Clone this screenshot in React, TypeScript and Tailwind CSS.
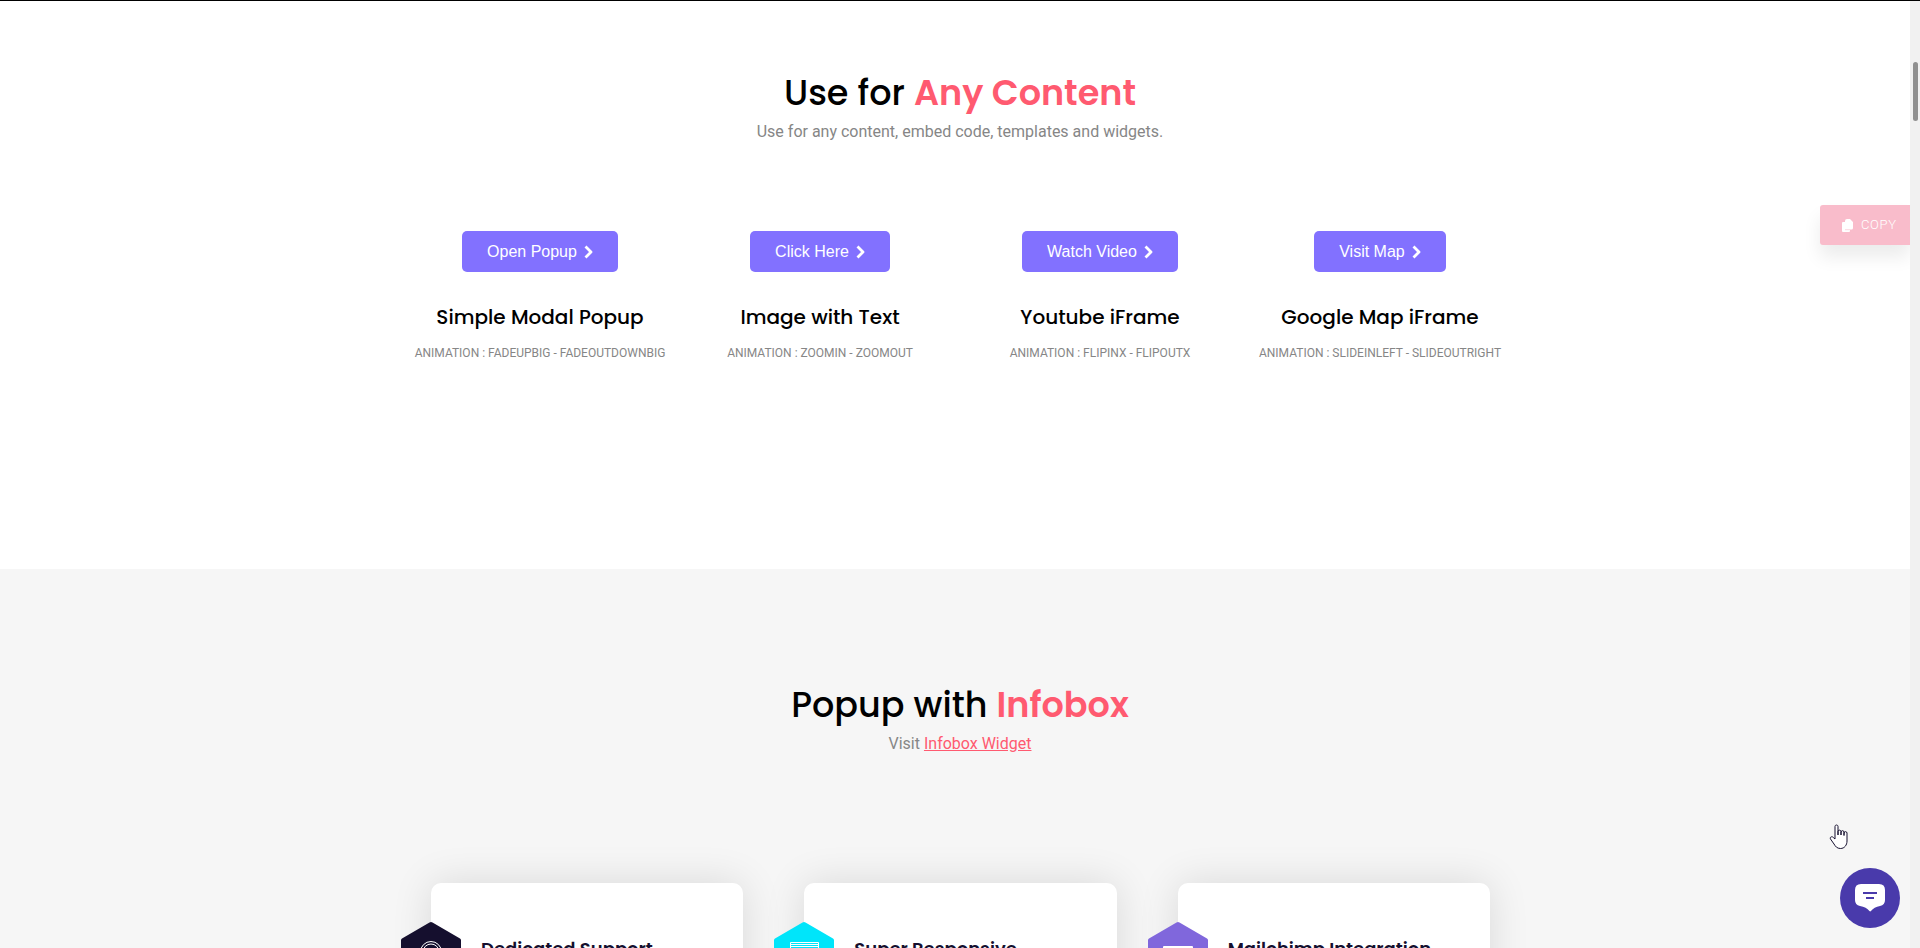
const demos = [
  { button: "Open Popup", title: "Simple Modal Popup", animation: "FadeUpBig - FadeOutDownBig" },
  { button: "Click Here", title: "Image with Text", animation: "ZoomIn - ZoomOut" },
  { button: "Watch Video", title: "Youtube iFrame", animation: "FlipInX - FlipOutX" },
  { button: "Visit Map", title: "Google Map iFrame", animation: "SlideInLeft - SlideOutRight" },
];

const ChevronIcon = () => (
  <svg viewBox="0 0 9 14" className="w-[9px] h-3.5" fill="none" stroke="currentColor" strokeWidth="2.8">
    <path d="M1.500 1.500L7 7l-5.500 5.500" strokeLinejoin="round" />
  </svg>
);

const CopyIcon = () => (
  <svg viewBox="0 0 11 13" className="w-[11px] h-[13px]" fill="currentColor">
    <path d="M5 0h3l3 3v6q0 1.500-1.500 1.500H8V12q0 1-1 1H1q-1 0-1-1V4q0-1 1-1h2V2q0-2 2-2z" />
    <path d="M3 10.700h5" stroke="#f9bccb" strokeWidth=".6" />
  </svg>
);

const SupportIcon = () => (
  <svg viewBox="0 0 32 32" className="w-8 h-8" fill="none" stroke="white">
    <circle cx="16" cy="12" r="10.5" />
    <circle cx="16" cy="12" r="8" />
    <path d="M5.500 12v7h3M26.500 12v7h-3" />
  </svg>
);

const ResponsiveIcon = () => (
  <svg viewBox="0 0 32 32" className="w-8 h-8" fill="none" stroke="white">
    <path d="M2.500 2.500h28v22h-28zM2.500 4.500h28M2.500 6.500h28M11 29.500h10" />
  </svg>
);

const MailIcon = () => (
  <svg viewBox="0 0 32 32" className="w-8 h-8" fill="none" stroke="white">
    <path d="M1.500 6.500h29v19h-29z" />
    <path d="M1.500 7.500h29M2 8l14 10 14-10" />
  </svg>
);

const infoboxes = [
  { title: "Dedicated Support", color: "text-[#150f2e]", icon: <SupportIcon /> },
  { title: "Super Responsive", color: "text-[#00e5fa]", icon: <ResponsiveIcon /> },
  { title: "Mailchimp Integration", color: "text-[#8067dc]", icon: <MailIcon /> },
];

// Section heading
const Heading = ({ text, accent }: { text: string; accent: string }) => (
  <h2 className="font-[Poppins,Inter,sans-serif] text-[35px] leading-[45px] font-medium text-black">
    {text} <span className="font-semibold text-[#ff5a70]">{accent}</span>
  </h2>
);

// Hexagon badge on the card edge
const Hexagon = ({ color, icon }: { color: string; icon: React.ReactNode }) => (
  <div className={`relative w-[60px] h-[68px] -ml-[30px] shrink-0 flex items-center justify-center ${color}`}>
    <svg viewBox="0 0 60 68" className="absolute inset-0 w-full h-full" fill="currentColor">
      <path d="M28.500 .6q1.500-1 3 0l27.500 15.800q1 .6 1 1.800v31.600q0 1.200-1 1.800L31.500 67.400q-1.500 1-3 0L1 51.600q-1-.6-1-1.800V18.200q0-1.200 1-1.800z" />
    </svg>
    <div className="relative">{icon}</div>
  </div>
);

export default function App() {
  return (
    <div className="relative h-screen overflow-hidden bg-white font-[Roboto,sans-serif] border-t border-black">
      <section className="pt-[69px] pb-[204px] text-center">
        <Heading text="Use for" accent="Any Content" />
        <p className="mt-[5px] text-base leading-6 text-[#868686]">
          Use for any content, embed code, templates and widgets.
        </p>

        <div className="mt-[87px] max-w-[1120px] mx-auto grid grid-cols-4">
          {demos.map((demo) => (
            <div key={demo.title} className="flex flex-col items-center">
              <button className="h-[41px] px-[25px] flex items-center gap-[7px] rounded-[5px] bg-[#8271ff] text-white text-base font-['Liberation_Sans',Arial,sans-serif] whitespace-nowrap">
                {demo.button}
                <ChevronIcon />
              </button>
              <h3 className="mt-[33px] font-[Poppins,Inter,sans-serif] text-xl leading-6 font-medium text-black">
                {demo.title}
              </h3>
              <p className="mt-3 text-xs leading-6 uppercase text-[#868686]">Animation : {demo.animation}</p>
            </div>
          ))}
        </div>
      </section>

      <section className="pt-[113px] pb-24 bg-[#f6f6f6] text-center">
        <Heading text="Popup with" accent="Infobox" />
        <p className="mt-[5px] text-base leading-6 text-[#868686]">
          Visit{" "}
          <a href="#infobox" className="text-[#ff5a70] underline">
            Infobox Widget
          </a>
        </p>

        <div className="mt-[127px] max-w-[1120px] mx-auto grid grid-cols-3">
          {infoboxes.map((box) => (
            <div key={box.title} className="pl-[31px] pr-[30px]">
              <div className="h-[220px] pt-[39px] flex items-start gap-5 rounded-[10px] bg-white shadow-[0_0_40px_rgba(0,0,0,0.12)] text-left">
                <Hexagon color={box.color} icon={box.icon} />
                <h4 className="mt-[15px] font-[Poppins,Inter,sans-serif] text-lg leading-6 font-semibold text-[#150f2e] whitespace-nowrap">
                  {box.title}
                </h4>
              </div>
            </div>
          ))}
        </div>
      </section>

      {/* Copy button */}
      <button className="absolute top-[204px] right-2.5 w-[90px] h-10 pl-[22px] flex items-center gap-2 rounded-l-[3px] bg-[#f9bccb] text-white text-[13px] font-light tracking-wider shadow-[0_12px_18px_rgba(0,0,0,0.08)]">
        <CopyIcon />
        COPY
      </button>

      {/* Scrollbar */}
      <div className="absolute inset-y-0 right-0 w-2.5 bg-[#f1f1f1]">
        <div className="mt-[61px] ml-[3px] w-[5px] h-[59px] rounded-full bg-[#909090]" />
      </div>

      {/* Chat launcher */}
      <button
        aria-label="Open chat"
        className="absolute right-5 bottom-5 w-[60px] h-[60px] rounded-full bg-[#493aab] flex items-center justify-center"
      >
        <svg viewBox="0 0 30 28" className="w-[30px] h-7">
          <path
            d="M6 0h18q6 0 6 6v10q0 5-5 6-6 1-9 5-.8.900-1.600 0-3-4-9.400-5-5-1-5-6V6q0-6 6-6z"
            fill="white"
          />
          <path d="M8 9h14M11 14h8" stroke="#493aab" strokeWidth="2" />
        </svg>
      </button>

      {/* Pointer */}
      <svg viewBox="0 0 20 26" className="absolute right-[71px] bottom-[98px] w-5 h-[26px]" fill="white" stroke="#150f2e">
        <path
          d="M6 15V2.500C6 .500 9 .500 9 2.500V11V7.500C9 5.700 12 5.700 12 7.500V11V8C12 6.200 15 6.200 15 8V11.500V9C15 7.200 18 7.200 18 9V17C18 21 15.500 24.500 11.500 24.500C8 24.500 6.500 22.500 5 20L1.500 15C.5 13 3 12 4.300 13.500Z"
          strokeLinejoin="round"
        />
      </svg>
    </div>
  );
}
